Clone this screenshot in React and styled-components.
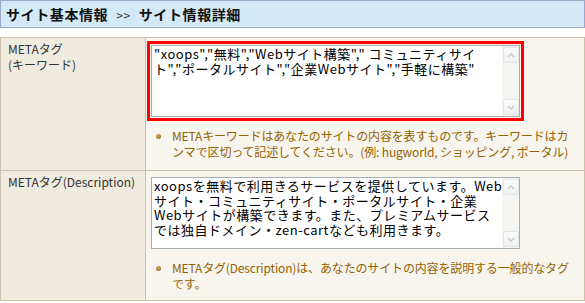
import React from "react";
import styled, { createGlobalStyle } from "styled-components";

const Global = createGlobalStyle`
  html, body {
    margin: 0;
    padding: 0;
    background: #fff;
  }
  body {
    font-family: "Noto Sans CJK JP", "Noto Sans", sans-serif;
    font-size: 12px;
    color: #333;
  }
`;

const Page = styled.div`
  width: 585px;
`;

const Header = styled.div`
  box-sizing: border-box;
  height: 28px;
  padding: 0 5px;
  display: flex;
  align-items: center;
  background: #d4e9f7;
  border: 1px solid #9ea6ca;
  font-size: 14px;
  font-weight: 700;
  letter-spacing: 0.6px;
  color: #111;
  margin-bottom: 9px;
`;

const Sep = styled.span`
  font-weight: 400;
  font-size: 12px;
  margin: 0 8px;
  color: #333;
`;

const Table = styled.div`
  border: 1px solid #cbbfad;
`;

const Row = styled.div`
  display: grid;
  grid-template-columns: 145px 1fr;
  & + & {
    border-top: 1px solid #cbbfad;
  }
`;

const Label = styled.div`
  background: #efebdf;
  border-right: 1px solid #cbbfad;
  padding: 3px 7px;
  line-height: 16px;
  color: #333;
`;

const Cell = styled.div`
  background: #f7f5ee;
  padding: ${(p) => (p.$first ? "7px 5px 10px" : "6px 5px 8px")};
`;

const TextBox = styled.div`
  box-sizing: border-box;
  width: 369px;
  height: ${(p) => p.$h}px;
  display: flex;
  background: #fff;
  border: 1px solid #a5acb2;
  outline: ${(p) => (p.$alert ? "3px solid #f00" : "none")};
  outline-offset: 1px;
`;

const Area = styled.textarea`
  flex: 1;
  min-width: 0;
  border: 0;
  margin: 0;
  padding: 1px 0 1px 2px;
  resize: none;
  outline: none;
  overflow: hidden;
  background: transparent;
  font-family: "Noto Sans CJK JP", sans-serif;
  font-size: 13px;
  letter-spacing: 0.5px;
  line-height: 14.5px;
  color: #000;
  white-space: pre;
`;

const ScrollBar = styled.div`
  width: 17px;
  flex: none;
  display: flex;
  flex-direction: column;
  justify-content: space-between;
  background: #f5f5f1;
  padding: 1px 0;
`;

const ScrollButton = styled.div`
  box-sizing: border-box;
  width: 16px;
  height: 16px;
  margin-left: 1px;
  border: 1px solid #e2e5ea;
  border-radius: 2px;
  background: linear-gradient(#fafbfc, #eef0f3);
  display: flex;
  align-items: center;
  justify-content: center;
`;

const Notes = styled.ul`
  list-style: none;
  margin: 11px 0 0;
  padding: 0;
`;

const Note = styled.li`
  position: relative;
  padding-left: 21px;
  padding-right: 2px;
  line-height: 16px;
  letter-spacing: -0.15px;
  color: #946300;
  &::before {
    content: "";
    position: absolute;
    left: 5px;
    top: 6px;
    width: 5px;
    height: 5px;
    border-radius: 50%;
    background: radial-gradient(circle at 40% 35%, #d9a656, #95631a);
  }
`;

const Arrow = ({ up }) => (
  <svg width="8" height="5" viewBox="0 0 8 5">
    <path
      d={up ? "M1 4 L4 1 L7 4" : "M1 1 L4 4 L7 1"}
      fill="none"
      stroke="#c3c8d1"
      strokeWidth="1.3"
    />
  </svg>
);

const Field = ({ value, alert, h }) => (
  <TextBox $alert={alert} $h={h}>
    <Area value={value} readOnly spellCheck={false} />
    <ScrollBar>
      <ScrollButton>
        <Arrow up />
      </ScrollButton>
      <ScrollButton>
        <Arrow />
      </ScrollButton>
    </ScrollBar>
  </TextBox>
);

const keywords =
  '"xoops","無料","Webサイト構築"," コミュニティサイ\nト","ポータルサイト","企業Webサイト","手軽に構築"';

const description =
  "xoopsを無料で利用きるサービスを提供しています。Web\nサイト・コミュニティサイト・ポータルサイト・企業\nWebサイトが構築できます。また、プレミアムサービス\nでは独自ドメイン・zen-cartなども利用きます。";

export default function App() {
  return (
    <Page>
      <Global />
      <Header>
        サイト基本情報<Sep>&gt;&gt;</Sep>サイト情報詳細
      </Header>
      <Table>
        <Row>
          <Label>
            METAタグ
            <br />
            (キーワード)
          </Label>
          <Cell $first>
            <Field value={keywords} alert h={72} />
            <Notes>
              <Note>
                METAキーワードはあなたのサイトの内容を表すものです。キーワードはカンマで区切って記述してください。(例: hugworld, ショッピング, ポータル)
              </Note>
            </Notes>
          </Cell>
        </Row>
        <Row>
          <Label>METAタグ(Description)</Label>
          <Cell>
            <Field value={description} h={72} />
            <Notes>
              <Note>
                METAタグ(Description)は、あなたのサイトの内容を説明する一般的なタグです。
              </Note>
            </Notes>
          </Cell>
        </Row>
      </Table>
    </Page>
  );
}
